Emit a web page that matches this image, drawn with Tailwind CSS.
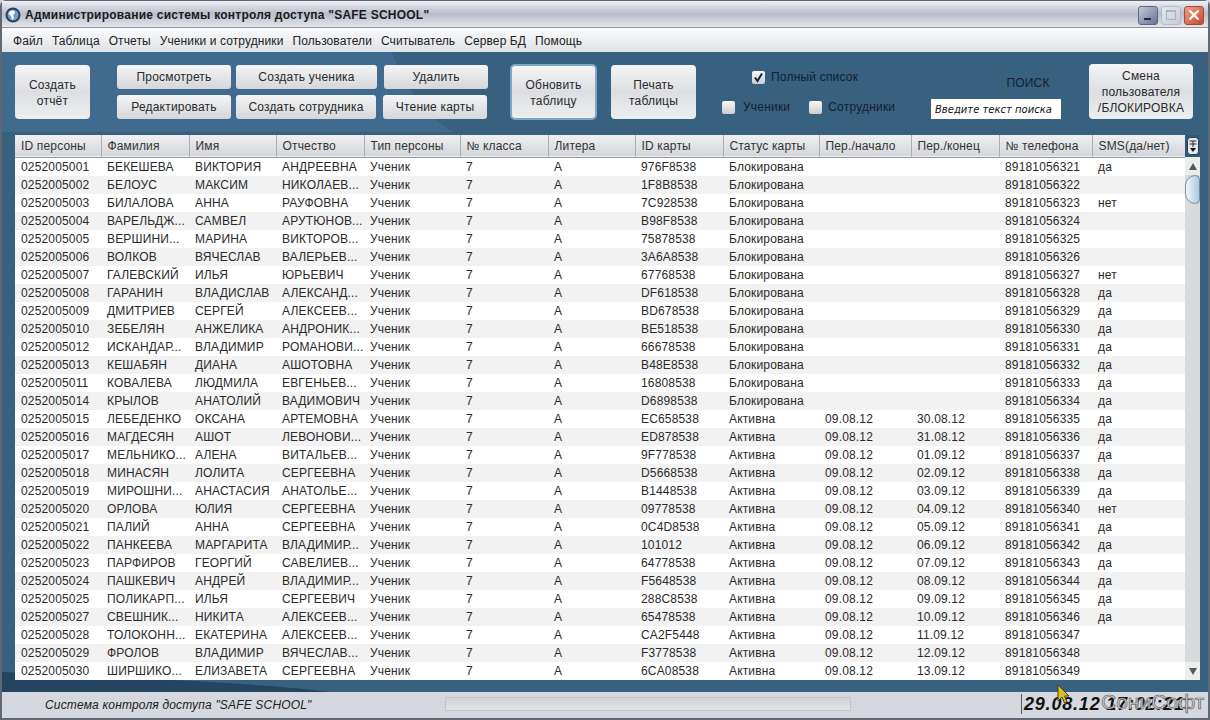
<!DOCTYPE html>
<html lang="ru">
<head>
    <meta charset="UTF-8">
    <title>Администрирование системы контроля доступа "SAFE SCHOOL"</title>
    <script src="https://cdn.jsdelivr.net/npm/@tailwindcss/browser@4"></script>
</head>
<body class="w-[1210px] h-[720px] overflow-hidden bg-[#d5d8de] font-['Liberation_Sans',sans-serif] text-[12px] text-[#222]">
    <div class="w-full h-full flex flex-col rounded-t-[6px] border-[2px] border-t-[1px] border-[#5f6873] bg-[#d5d8de]">
        <!-- Title bar -->
        <div class="h-[27px] shrink-0 flex items-center pt-[2px] pl-[3px] pr-[4px] bg-gradient-to-b from-[#eef0f4] via-[#b9bdc9] to-[#e4e6eb] border-b border-[#8d929c]">
            <svg class="w-[16px] h-[16px] mr-[4px]" viewBox="0 0 16 16">
                <circle cx="8" cy="8" r="7.5" fill="#27405f"/>
                <circle cx="8" cy="8" r="5.5" fill="#6f9cc9"/>
                <path d="M5 4 L9 3.5 L10 6 L8 8 L9 11 L7 13 L6 9 L3.5 7 Z" fill="#fff"/>
            </svg>
            <span class="font-bold text-[12px] tracking-[0.23px] text-[#1a1a1a] whitespace-nowrap">Администрирование системы контроля доступа "SAFE SCHOOL"</span>
            <div class="ml-auto flex gap-[3px] items-center">
                <div class="w-[20px] h-[19px] rounded-[3px] border border-[#5d6680] bg-gradient-to-br from-[#c4c8dc] to-[#6c7296] flex items-end pl-[5px] pb-[4px]">
                    <div class="w-[7px] h-[2px] bg-[#1f2a44]"></div>
                </div>
                <div class="w-[20px] h-[19px] rounded-[3px] border border-[#b5bbc6] bg-gradient-to-br from-[#e4e8ee] to-[#c3cbd8] flex items-center justify-center">
                    <div class="w-[10px] h-[10px] border border-[#aab2bf] border-t-[2px]"></div>
                </div>
                <div class="w-[20px] h-[19px] rounded-[3px] border border-[#9c4a3c] bg-gradient-to-br from-[#eda18c] to-[#c8432a] flex items-center justify-center">
                    <svg class="w-[12px] h-[12px]" viewBox="0 0 12 12"><path d="M1.5 1.5 L10.5 10.5 M10.5 1.5 L1.5 10.5" stroke="#fff" stroke-width="2.2"/></svg>
                </div>
            </div>
        </div>

        <!-- Menu -->
        <div class="h-[24px] shrink-0 flex items-center gap-[9px] pt-[1px] pl-[11px] bg-gradient-to-b from-[#fbfbfc] to-[#dfe2e6] text-[12px] tracking-[0.1px]">
            <span>Файл</span><span>Таблица</span><span>Отчеты</span><span>Ученики и сотрудники</span><span>Пользователи</span><span>Считыватель</span><span>Сервер БД</span><span>Помощь</span>
        </div>

        <!-- Main blue area -->
        <div class="relative h-[640px] shrink-0 bg-[#38607f] overflow-hidden">
            <svg class="absolute inset-0 w-full h-full" viewBox="0 0 1206 640" preserveAspectRatio="none">
                <path d="M0 0 H390 C400 30 420 60 450 80 H0 Z" fill="#406b8e"/>
                <path d="M0 620 C100 625 250 630 330 640 H0 Z" fill="#234562"/>
            </svg>

            <!-- Toolbar -->
            <div class="relative h-[83px] pt-[13px] pl-[13px] flex items-start text-[12px] tracking-[0.2px] text-[#2a2a2a]">
                <button class="w-[75px] h-[54px] pt-[2px] rounded-[4px] bg-gradient-to-b from-[#f4f5f6] via-[#dcdee2] to-[#eceef0] leading-[16px]">Создать<br>отчёт</button>
                <div class="ml-[27px] flex flex-col gap-[6px]">
                    <div class="flex">
                        <button class="w-[114px] h-[24px] rounded-[3px] bg-gradient-to-b from-[#f4f5f6] to-[#d4d6da]">Просмотреть</button>
                        <button class="ml-[5px] w-[141px] h-[24px] rounded-[3px] bg-gradient-to-b from-[#f4f5f6] to-[#d4d6da]">Создать ученика</button>
                        <button class="ml-[7px] w-[104px] h-[24px] rounded-[3px] bg-gradient-to-b from-[#f4f5f6] to-[#d4d6da]">Удалить</button>
                    </div>
                    <div class="flex">
                        <button class="w-[114px] h-[24px] rounded-[3px] bg-gradient-to-b from-[#f4f5f6] to-[#d4d6da]">Редактировать</button>
                        <button class="ml-[5px] w-[140px] h-[24px] rounded-[3px] bg-gradient-to-b from-[#f4f5f6] to-[#d4d6da]">Создать сотрудника</button>
                        <button class="ml-[7px] w-[104px] h-[24px] rounded-[3px] bg-gradient-to-b from-[#f4f5f6] to-[#d4d6da]">Чтение карты</button>
                    </div>
                </div>
                <button class="ml-[22px] w-[87px] h-[56px] -mt-[1px] pt-[2px] rounded-[5px] border-[2px] border-[#7ea6c8] bg-gradient-to-b from-[#f4f5f6] via-[#dcdee2] to-[#eceef0] leading-[16px]">Обновить<br>таблицу</button>
                <button class="ml-[14px] w-[85px] h-[54px] pt-[2px] rounded-[4px] bg-gradient-to-b from-[#f4f5f6] via-[#dcdee2] to-[#eceef0] leading-[16px]">Печать<br>таблицы</button>

                <!-- Filters -->
                <div class="ml-[26px] w-[181px] h-[54px] flex flex-col text-[#15202b]">
                    <label class="h-[24px] pl-[30px] flex items-center gap-[6px]">
                        <span class="w-[13px] h-[13px] rounded-[2px] bg-gradient-to-b from-[#f8f8f8] to-[#c9ccd1] flex items-center justify-center">
                            <svg class="w-[11px] h-[11px]" viewBox="0 0 11 11"><path d="M2 5.5 L4.5 9 L9 1.5" fill="none" stroke="#14233a" stroke-width="2"/></svg>
                        </span>
                        Полный список
                    </label>
                    <div class="mt-[6px] h-[24px] flex items-center">
                        <span class="w-[13px] h-[13px] rounded-[2px] bg-gradient-to-b from-[#f8f8f8] to-[#c9ccd1]"></span>
                        <span class="ml-[8px]">Ученики</span>
                        <span class="ml-[19px] w-[13px] h-[13px] rounded-[2px] bg-gradient-to-b from-[#f8f8f8] to-[#c9ccd1]"></span>
                        <span class="ml-[6px]">Сотрудники</span>
                    </div>
                </div>

                <!-- Search -->
                <div class="ml-[28px] w-[130px] flex flex-col items-center text-[#15202b]">
                    <span class="mt-[11px] h-[14px] leading-[14px] ml-[64px]">ПОИСК</span>
                    <div class="mt-[9px] w-[130px] h-[20px] bg-white pl-[4px] flex items-center text-[10px] italic tracking-[0px] text-[#111] font-['DejaVu_Sans',sans-serif] whitespace-nowrap overflow-hidden">Введите текст поиска</div>
                </div>

                <button class="ml-[28px] w-[104px] h-[55px] -mt-[1px] rounded-[4px] bg-gradient-to-b from-[#f4f5f6] via-[#dcdee2] to-[#eceef0] leading-[16px]">Смена<br>пользователя<br>/БЛОКИРОВКА</button>
            </div>

            <!-- Table + scrollbar -->
            <div class="relative ml-[13px] w-[1185px] h-[545px] flex">
                <div class="w-[1170px] h-[545px] bg-white overflow-hidden">
                    <table class="table-fixed w-[1170px] border-collapse text-[12px] tracking-[0.16px] text-[#2a2a2a]">
                        <colgroup>
                            <col class="w-[86px]"><col class="w-[88px]"><col class="w-[87px]"><col class="w-[88px]"><col class="w-[96px]"><col class="w-[88px]"><col class="w-[87px]"><col class="w-[88px]"><col class="w-[96px]"><col class="w-[92px]"><col class="w-[88px]"><col class="w-[93px]"><col class="w-[93px]">
                        </colgroup>
                        <thead>
                            <tr class="h-[22px] bg-gradient-to-b from-[#eff0f2] to-[#d3d5da] border-b border-[#8f97a1] text-[#333]" id="head"></tr>
                        </thead>
                        <tbody id="rows"></tbody>
                    </table>
                </div>
                <!-- Scrollbar -->
                <div class="w-[15px] h-[545px] flex flex-col bg-[#d9dadc]">
                    <div class="h-[22px] shrink-0 bg-[#33597a] flex items-center justify-center">
                        <svg class="w-[12px] h-[18px]" viewBox="0 0 12 18">
                            <rect x="0.5" y="0.5" width="11" height="17" rx="3" fill="#e8eaee" stroke="#243c55"/>
                            <path d="M2.5 4 H9.5 M2.5 7 H9.5 M6 4 V10" stroke="#222" fill="none"/>
                            <path d="M3 11 H9 L6 15 Z" fill="#111"/>
                        </svg>
                    </div>
                    <div class="h-[18px] shrink-0 flex items-center justify-center bg-[#eceded]">
                        <svg class="w-[8px] h-[7px]" viewBox="0 0 8 7"><path d="M4 0 L8 7 H0 Z" fill="#55585c"/></svg>
                    </div>
                    <div class="h-[29px] shrink-0 rounded-l-[14px] rounded-r-[6px] bg-gradient-to-r from-[#f2f7fb] to-[#a9c8e0] border border-[#7c8a96]"></div>
                    <div class="flex-1"></div>
                    <div class="h-[18px] shrink-0 flex items-center justify-center bg-[#eceded]">
                        <svg class="w-[8px] h-[7px]" viewBox="0 0 8 7"><path d="M0 0 H8 L4 7 Z" fill="#55585c"/></svg>
                    </div>
                </div>
            </div>
        </div>

        <!-- Status bar -->
        <div class="relative flex-1 flex items-center bg-[#d5d8de]">
            <span class="ml-[43px] w-[400px] -mt-[1px] italic text-[12px] tracking-[0.17px] text-[#222]">Система контроля доступа "SAFE SCHOOL"</span>
            <div class="w-[406px] h-[14px] -mt-[2px] border border-[#c2c5ca] bg-gradient-to-b from-[#d0d3d8] to-[#e2e4e8]"></div>
            <div class="ml-[170px] h-[20px] -mt-[2px] pl-[2px] border-l border-[#555] flex items-center font-bold italic text-[18px] tracking-[0.8px] text-[#111] whitespace-nowrap">29.08.12 17:02:21</div>
            <span class="absolute left-[1099px] top-[-6px] text-[21px] text-[#d2d3d5] whitespace-nowrap [-webkit-text-stroke:0.6px_#4f4f4f]">СониСофт</span>
        </div>
    </div>

    <!-- Mouse pointer over the status bar -->
    <svg class="absolute left-[1056px] top-[684px] w-[14px] h-[20px]" viewBox="0 0 14 20">
        <path d="M2 1 L2 17 L6 13 L8.5 19 L11 18 L8.5 12 L13 12 Z" fill="#d9c21d" stroke="#4a4210" stroke-width="1"/>
    </svg>

    <script>
        var heads = ['ID персоны', 'Фамилия', 'Имя', 'Отчество', 'Тип персоны', '№ класса', 'Литера', 'ID карты', 'Статус карты', 'Пер./начало', 'Пер./конец', '№ телефона', 'SMS(да/нет)'];
        var blocked = 'Блокирована', active = 'Активна', start = '09.08.12';
        var data = [
            ['0252005001', 'БЕКЕШЕВА', 'ВИКТОРИЯ', 'АНДРЕЕВНА', '976F8538', blocked, '', '', '89181056321', 'да'],
            ['0252005002', 'БЕЛОУС', 'МАКСИМ', 'НИКОЛАЕВ...', '1F8B8538', blocked, '', '', '89181056322', ''],
            ['0252005003', 'БИЛАЛОВА', 'АННА', 'РАУФОВНА', '7C928538', blocked, '', '', '89181056323', 'нет'],
            ['0252005004', 'ВАРЕЛЬДЖ...', 'САМВЕЛ', 'АРУТЮНОВ...', 'B98F8538', blocked, '', '', '89181056324', ''],
            ['0252005005', 'ВЕРШИНИ...', 'МАРИНА', 'ВИКТОРОВ...', '75878538', blocked, '', '', '89181056325', ''],
            ['0252005006', 'ВОЛКОВ', 'ВЯЧЕСЛАВ', 'ВАЛЕРЬЕВ...', '3A6A8538', blocked, '', '', '89181056326', ''],
            ['0252005007', 'ГАЛЕВСКИЙ', 'ИЛЬЯ', 'ЮРЬЕВИЧ', '67768538', blocked, '', '', '89181056327', 'нет'],
            ['0252005008', 'ГАРАНИН', 'ВЛАДИСЛАВ', 'АЛЕКСАНД...', 'DF618538', blocked, '', '', '89181056328', 'да'],
            ['0252005009', 'ДМИТРИЕВ', 'СЕРГЕЙ', 'АЛЕКСЕЕВ...', 'BD678538', blocked, '', '', '89181056329', 'да'],
            ['0252005010', 'ЗЕБЕЛЯН', 'АНЖЕЛИКА', 'АНДРОНИК...', 'BE518538', blocked, '', '', '89181056330', 'да'],
            ['0252005012', 'ИСКАНДАР...', 'ВЛАДИМИР', 'РОМАНОВИ...', '66678538', blocked, '', '', '89181056331', 'да'],
            ['0252005013', 'КЕШАБЯН', 'ДИАНА', 'АШОТОВНА', 'B48E8538', blocked, '', '', '89181056332', 'да'],
            ['0252005011', 'КОВАЛЕВА', 'ЛЮДМИЛА', 'ЕВГЕНЬЕВ...', '16808538', blocked, '', '', '89181056333', 'да'],
            ['0252005014', 'КРЫЛОВ', 'АНАТОЛИЙ', 'ВАДИМОВИЧ', 'D6898538', blocked, '', '', '89181056334', 'да'],
            ['0252005015', 'ЛЕБЕДЕНКО', 'ОКСАНА', 'АРТЕМОВНА', 'EC658538', active, start, '30.08.12', '89181056335', 'да'],
            ['0252005016', 'МАГДЕСЯН', 'АШОТ', 'ЛЕВОНОВИ...', 'ED878538', active, start, '31.08.12', '89181056336', 'да'],
            ['0252005017', 'МЕЛЬНИКО...', 'АЛЕНА', 'ВИТАЛЬЕВ...', '9F778538', active, start, '01.09.12', '89181056337', 'да'],
            ['0252005018', 'МИНАСЯН', 'ЛОЛИТА', 'СЕРГЕЕВНА', 'D5668538', active, start, '02.09.12', '89181056338', 'да'],
            ['0252005019', 'МИРОШНИ...', 'АНАСТАСИЯ', 'АНАТОЛЬЕ...', 'B1448538', active, start, '03.09.12', '89181056339', 'да'],
            ['0252005020', 'ОРЛОВА', 'ЮЛИЯ', 'СЕРГЕЕВНА', '09778538', active, start, '04.09.12', '89181056340', 'нет'],
            ['0252005021', 'ПАЛИЙ', 'АННА', 'СЕРГЕЕВНА', '0C4D8538', active, start, '05.09.12', '89181056341', 'да'],
            ['0252005022', 'ПАНКЕЕВА', 'МАРГАРИТА', 'ВЛАДИМИР...', '101012', active, start, '06.09.12', '89181056342', 'да'],
            ['0252005023', 'ПАРФИРОВ', 'ГЕОРГИЙ', 'САВЕЛИЕВ...', '64778538', active, start, '07.09.12', '89181056343', 'да'],
            ['0252005024', 'ПАШКЕВИЧ', 'АНДРЕЙ', 'ВЛАДИМИР...', 'F5648538', active, start, '08.09.12', '89181056344', 'да'],
            ['0252005025', 'ПОЛИКАРП...', 'ИЛЬЯ', 'СЕРГЕЕВИЧ', '288C8538', active, start, '09.09.12', '89181056345', 'да'],
            ['0252005027', 'СВЕШНИК...', 'НИКИТА', 'АЛЕКСЕЕВ...', '65478538', active, start, '10.09.12', '89181056346', 'да'],
            ['0252005028', 'ТОЛОКОНН...', 'ЕКАТЕРИНА', 'АЛЕКСЕЕВ...', 'CA2F5448', active, start, '11.09.12', '89181056347', ''],
            ['0252005029', 'ФРОЛОВ', 'ВЛАДИМИР', 'ВЯЧЕСЛАВ...', 'F3778538', active, start, '12.09.12', '89181056348', ''],
            ['0252005030', 'ШИРШИКО...', 'ЕЛИЗАВЕТА', 'СЕРГЕЕВНА', '6CA08538', active, start, '13.09.12', '89181056349', '']
        ];

        document.getElementById('head').innerHTML = heads.map(function (h) {
            return '<th class="text-left font-normal pl-[6px] pr-0 border-r border-[#a9aeb6] whitespace-nowrap overflow-hidden">' + h + '</th>';
        }).join('');

        document.getElementById('rows').innerHTML = data.map(function (r) {
            var cells = [r[0], r[1], r[2], r[3], 'Ученик', '7', 'А', r[4], r[5], r[6], r[7], r[8], r[9]];
            return '<tr class="h-[18px] odd:bg-white even:bg-[#f2f2f2]">' + cells.map(function (c) {
                return '<td class="pl-[6px] pr-0 py-0 leading-[18px] whitespace-nowrap overflow-hidden">' + c + '</td>';
            }).join('') + '</tr>';
        }).join('');
    </script>
</body>
</html>
